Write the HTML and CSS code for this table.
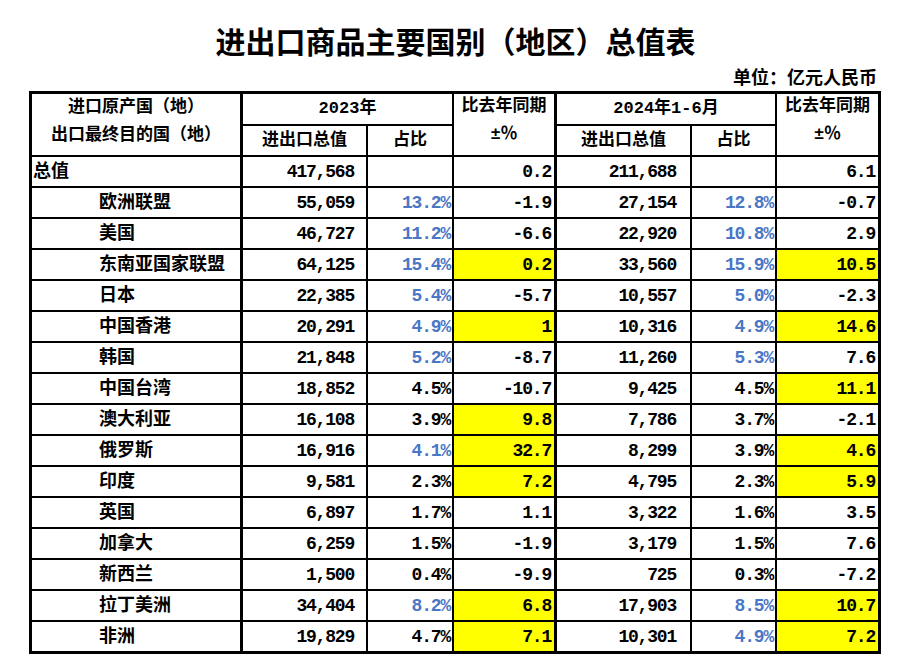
FILE: index.html
```html
<!DOCTYPE html>
<html lang="zh-CN">
<head>
<meta charset="utf-8">
<title>进出口商品主要国别（地区）总值表</title>
<link rel="stylesheet" href="styles.css">
</head>
<body>
<div class="page">
  <h1 class="title">进出口商品主要国别（地区）总值表</h1>
  <div class="unit">单位：亿元人民币</div>
  <div class="sheet">
    <div class="cell c1 hdr hdr-name">进口原产国（地）<br>出口最终目的国（地）</div>
    <div class="cell span2 hdr">2023年</div>
    <div class="cell c4 hdr hdr-yoy">比去年同期<br>±％</div>
    <div class="cell span2 hdr">2024年1-6月</div>
    <div class="cell c7 hdr hdr-yoy">比去年同期<br>±％</div>
    <div class="cell hdr">进出口总值</div>
    <div class="cell hdr">占比</div>
    <div class="cell hdr">进出口总值</div>
    <div class="cell hdr">占比</div>

    <div class="cell c1 name total">总值</div>
    <div class="cell val">417,568</div>
    <div class="cell pct"></div>
    <div class="cell c4 num">0.2</div>
    <div class="cell val2">211,688</div>
    <div class="cell pct"></div>
    <div class="cell c7 num">6.1</div>

    <div class="cell c1 name">欧洲联盟</div>
    <div class="cell val">55,059</div>
    <div class="cell pct blue">13.2%</div>
    <div class="cell c4 num">-1.9</div>
    <div class="cell val2">27,154</div>
    <div class="cell pct blue">12.8%</div>
    <div class="cell c7 num">-0.7</div>

    <div class="cell c1 name">美国</div>
    <div class="cell val">46,727</div>
    <div class="cell pct blue">11.2%</div>
    <div class="cell c4 num">-6.6</div>
    <div class="cell val2">22,920</div>
    <div class="cell pct blue">10.8%</div>
    <div class="cell c7 num">2.9</div>

    <div class="cell c1 name">东南亚国家联盟</div>
    <div class="cell val">64,125</div>
    <div class="cell pct blue">15.4%</div>
    <div class="cell c4 num hl">0.2</div>
    <div class="cell val2">33,560</div>
    <div class="cell pct blue">15.9%</div>
    <div class="cell c7 num hl">10.5</div>

    <div class="cell c1 name">日本</div>
    <div class="cell val">22,385</div>
    <div class="cell pct blue">5.4%</div>
    <div class="cell c4 num">-5.7</div>
    <div class="cell val2">10,557</div>
    <div class="cell pct blue">5.0%</div>
    <div class="cell c7 num">-2.3</div>

    <div class="cell c1 name">中国香港</div>
    <div class="cell val">20,291</div>
    <div class="cell pct blue">4.9%</div>
    <div class="cell c4 num hl">1</div>
    <div class="cell val2">10,316</div>
    <div class="cell pct blue">4.9%</div>
    <div class="cell c7 num hl">14.6</div>

    <div class="cell c1 name">韩国</div>
    <div class="cell val">21,848</div>
    <div class="cell pct blue">5.2%</div>
    <div class="cell c4 num">-8.7</div>
    <div class="cell val2">11,260</div>
    <div class="cell pct blue">5.3%</div>
    <div class="cell c7 num">7.6</div>

    <div class="cell c1 name">中国台湾</div>
    <div class="cell val">18,852</div>
    <div class="cell pct">4.5%</div>
    <div class="cell c4 num">-10.7</div>
    <div class="cell val2">9,425</div>
    <div class="cell pct">4.5%</div>
    <div class="cell c7 num hl">11.1</div>

    <div class="cell c1 name">澳大利亚</div>
    <div class="cell val">16,108</div>
    <div class="cell pct">3.9%</div>
    <div class="cell c4 num hl">9.8</div>
    <div class="cell val2">7,786</div>
    <div class="cell pct">3.7%</div>
    <div class="cell c7 num">-2.1</div>

    <div class="cell c1 name">俄罗斯</div>
    <div class="cell val">16,916</div>
    <div class="cell pct blue">4.1%</div>
    <div class="cell c4 num hl">32.7</div>
    <div class="cell val2">8,299</div>
    <div class="cell pct">3.9%</div>
    <div class="cell c7 num hl">4.6</div>

    <div class="cell c1 name">印度</div>
    <div class="cell val">9,581</div>
    <div class="cell pct">2.3%</div>
    <div class="cell c4 num hl">7.2</div>
    <div class="cell val2">4,795</div>
    <div class="cell pct">2.3%</div>
    <div class="cell c7 num hl">5.9</div>

    <div class="cell c1 name">英国</div>
    <div class="cell val">6,897</div>
    <div class="cell pct">1.7%</div>
    <div class="cell c4 num">1.1</div>
    <div class="cell val2">3,322</div>
    <div class="cell pct">1.6%</div>
    <div class="cell c7 num">3.5</div>

    <div class="cell c1 name">加拿大</div>
    <div class="cell val">6,259</div>
    <div class="cell pct">1.5%</div>
    <div class="cell c4 num">-1.9</div>
    <div class="cell val2">3,179</div>
    <div class="cell pct">1.5%</div>
    <div class="cell c7 num">7.6</div>

    <div class="cell c1 name">新西兰</div>
    <div class="cell val">1,500</div>
    <div class="cell pct">0.4%</div>
    <div class="cell c4 num">-9.9</div>
    <div class="cell val2">725</div>
    <div class="cell pct">0.3%</div>
    <div class="cell c7 num">-7.2</div>

    <div class="cell c1 name">拉丁美洲</div>
    <div class="cell val">34,404</div>
    <div class="cell pct blue">8.2%</div>
    <div class="cell c4 num hl">6.8</div>
    <div class="cell val2">17,903</div>
    <div class="cell pct blue">8.5%</div>
    <div class="cell c7 num hl">10.7</div>

    <div class="cell c1 name last">非洲</div>
    <div class="cell val last">19,829</div>
    <div class="cell pct last">4.7%</div>
    <div class="cell c4 num hl last">7.1</div>
    <div class="cell val2 last">10,301</div>
    <div class="cell pct blue last">4.9%</div>
    <div class="cell c7 num hl last">7.2</div>
  </div>
</div>
</body>
</html>
```

FILE: styles.css
```css
html, body {
  margin: 0;
  padding: 0;
  background: #ffffff;
}

.page {
  width: 905px;
  color: #000;
}

.title {
  margin: 0;
  padding-top: 22px;
  padding-left: 6px;
  text-align: center;
  font-family: "Noto Sans CJK SC", sans-serif;
  font-weight: 700;
  font-size: 30px;
  line-height: 36px;
}

.unit {
  margin-top: 9px;
  padding-right: 28px;
  text-align: right;
  font-family: "Noto Sans CJK SC", sans-serif;
  font-weight: 700;
  font-size: 18px;
  line-height: 18px;
}

.sheet {
  margin-top: 6px;
  margin-left: 29px;
  width: 846px;
  border: 3px solid #000;
  display: grid;
  grid-template-columns: 211px 125px 86px 103px 135px 85px 101px;
  grid-template-rows: 32px 31px repeat(15, 31px) 29px;
  font-family: "Liberation Mono", "Noto Sans CJK SC", monospace;
  font-weight: 700;
  font-size: 18px;
  letter-spacing: -1.2px;
}

.cell {
  box-sizing: border-box;
  border-right: 2px solid #000;
  border-bottom: 2px solid #000;
  display: flex;
  align-items: center;
  justify-content: flex-end;
  white-space: nowrap;
  line-height: 20px;
  padding-right: 2px;
}

.c1 { border-right-width: 3px; }
.c4 { border-right-width: 3px; }
.c7 { border-right: none; padding-right: 3px; }
.last { border-bottom: none; }

.span2 { grid-column: span 2; }

.hdr {
  justify-content: center;
  text-align: center;
  padding-right: 0;
  font-size: 17px;
  letter-spacing: 0;
}

.hdr-name {
  grid-row: span 2;
  line-height: 28px;
  padding-bottom: 6px;
}

.hdr-yoy {
  grid-row: span 2;
  line-height: 28px;
  padding-bottom: 8px;
}

.name {
  justify-content: flex-start;
  padding-left: 67px;
  letter-spacing: 0;
}

.name.total { padding-left: 1px; }

.val { padding-right: 12px; }
.val2 { padding-right: 14px; }
.num { padding-right: 3px; }

.blue { color: #4a76c6; }
.hl { background: #ffff00; }
```
